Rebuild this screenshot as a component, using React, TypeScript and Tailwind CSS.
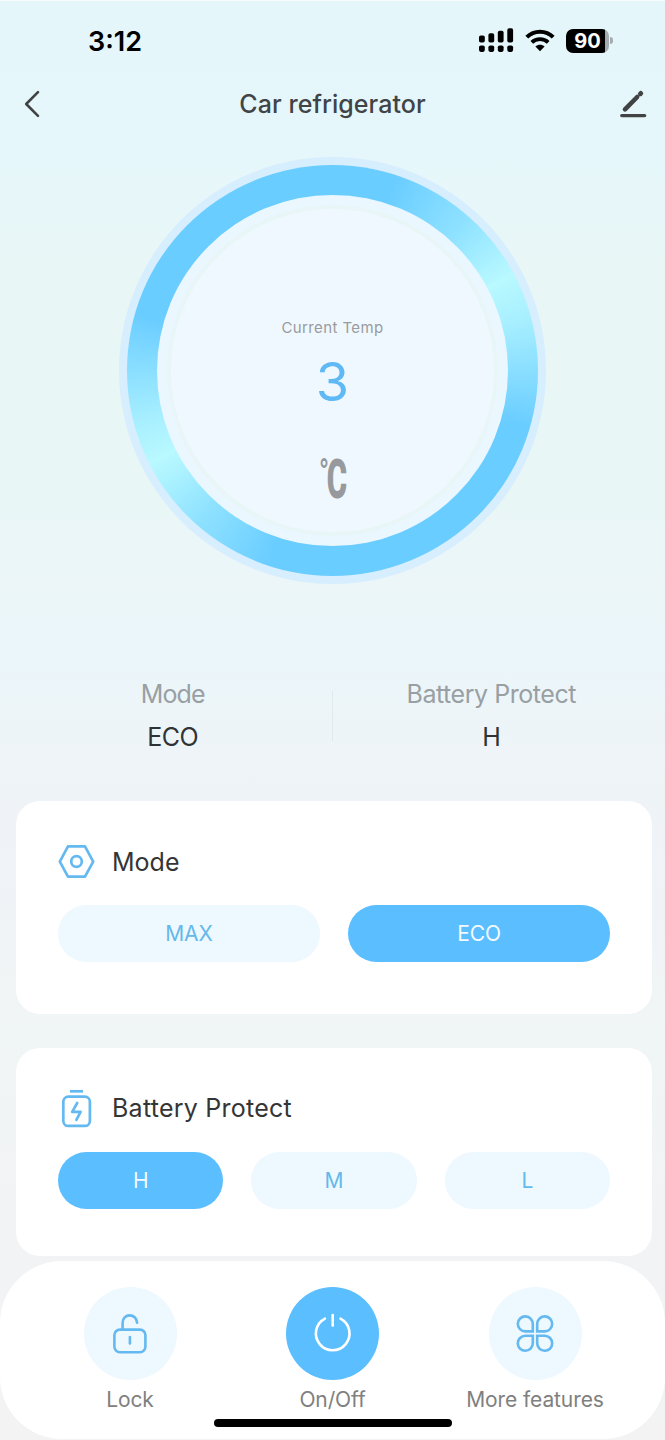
import React from 'react';

function SignalIcon() {
  return (
    <svg width="35" height="25" viewBox="0 0 35 25" fill="#000">
      <rect x="0" y="7.5" width="5.8" height="7" rx="1.8" />
      <rect x="9.4" y="5.3" width="5.8" height="9.2" rx="1.8" />
      <rect x="18.8" y="2.8" width="5.8" height="11.7" rx="1.8" />
      <rect x="28.3" y="0.2" width="5.8" height="14.3" rx="1.8" />
      <rect x="0" y="17.5" width="5.8" height="6.4" rx="1.8" />
      <rect x="9.4" y="17.5" width="5.8" height="6.4" rx="1.8" />
      <rect x="18.8" y="17.5" width="5.8" height="6.4" rx="1.8" />
      <rect x="28.3" y="17.5" width="5.8" height="6.4" rx="1.8" />
    </svg>
  );
}

function WifiIcon() {
  return (
    <svg width="30" height="23" viewBox="0 0 30 23" fill="none" stroke="#000">
      <path d="M1.8 8.2C9 0.8 21 0.8 28.2 8.2" strokeWidth="4" />
      <path d="M6.8 13.3C11.3 9 18.7 9 23.2 13.3" strokeWidth="3.8" />
      <path d="M10.4 17.6C13 15.2 17 15.2 19.6 17.6L15 22.2Z" fill="#000" stroke="none" />
    </svg>
  );
}

function ModeIcon() {
  return (
    <svg width="37" height="36" viewBox="0 0 37 36" fill="none" stroke="#64b9f0" strokeWidth="2.7">
      <path d="M10 2.4H27L35.2 17.6L27 32.6H10L1.8 17.6Z" strokeLinejoin="round" />
      <circle cx="18.5" cy="17.5" r="5.3" />
    </svg>
  );
}

function BatteryIcon() {
  return (
    <svg width="37" height="40" viewBox="0 0 37 40" fill="none" stroke="#64b9f0" strokeWidth="2.7" strokeLinejoin="round">
      <path d="M12 3.3H25" />
      <rect x="5.3" y="8.7" width="26.6" height="29.2" rx="5" />
      <path d="M19.2 15L14.2 23.8H22.6L18.4 31.8" strokeLinecap="round" />
    </svg>
  );
}

function LockIcon() {
  return (
    <svg width="36" height="42" viewBox="0 0 36 42" fill="none" stroke="#64b9f0" strokeWidth="2.6" strokeLinecap="round">
      <rect x="2.4" y="16.6" width="31" height="22.6" rx="5.5" />
      <path d="M10.6 16.4V9.8C10.6 5.2 13.8 2.4 17.6 2.4C21.4 2.4 24.4 5 25.1 9.8" />
      <path d="M17.9 24V30.5" />
    </svg>
  );
}

function PowerIcon() {
  return (
    <svg width="40" height="42" viewBox="0 0 40 42" fill="none" stroke="#fff" strokeWidth="2.6" strokeLinecap="round">
      <path d="M19.7 2V12.6" />
      <path d="M11.9 5.6A16.8 16.8 0 1 0 27.5 5.6" />
    </svg>
  );
}

function MoreIcon() {
  return (
    <svg width="38" height="38" viewBox="0 0 38 38" fill="none" stroke="#64b9f0" strokeWidth="2.6">
      <path d="M16.8 16.4V9.2A7.5 7.5 0 1 0 9.3 16.4Z" />
      <path d="M21.2 16.4V9.2A7.5 7.5 0 1 1 28.7 16.4Z" />
      <path d="M16.8 20.8V28A7.5 7.5 0 1 1 9.3 20.8Z" />
      <path d="M21.2 20.8V28A7.5 7.5 0 1 0 28.7 20.8Z" />
    </svg>
  );
}

function Pill({ label, active }: { label: string; active?: boolean }) {
  return (
    <button
      className={
        'h-[57px] flex-1 rounded-full pt-px text-[21px] tracking-[-0.1px] ' +
        (active ? 'bg-[#5abeff] text-[#f4faff]' : 'bg-[#eef8ff] text-[#64b9ea]')
      }
    >
      {label}
    </button>
  );
}

function NavItem({ label, active, children }: { label: string; active?: boolean; children: React.ReactNode }) {
  return (
    <div className="flex w-[202.5px] flex-col items-center">
      <div
        className={
          'flex h-[93px] w-[93px] items-center justify-center rounded-full ' +
          (active ? 'bg-[#5abeff]' : 'bg-[#eef8ff]')
        }
      >
        {children}
      </div>
      <div className="mt-[5px] h-[30px] whitespace-nowrap text-[21px] leading-[30px] tracking-[-0.1px] text-[#808080]">{label}</div>
    </div>
  );
}

export default function App() {
  return (
    <div className="flex h-[1440px] w-[665px] flex-col overflow-hidden border-t border-[#f6fbfc] bg-[linear-gradient(180deg,#e4f6fa_0%,#e6f7fb_11%,#e8f6f6_18%,#e9f6f6_35%,#ecf6f9_40%,#ebf6fa_46%,#eef4f7_52%,#f0f3f7_60%,#f0f5f5_72%,#f2f3f5_84%,#f3f3f4_100%)] font-['Inter',sans-serif]">
      {/* Status bar */}
      <div className="flex h-[79px] shrink-0 items-center pl-[88px] pr-[52px]">
        <div className="pt-[3px] text-[27px] font-semibold text-black">3:12</div>
        <div className="ml-auto flex items-center">
          <SignalIcon />
          <div className="ml-[11px]">
            <WifiIcon />
          </div>
          <div className="ml-[11px] flex h-6 w-[43px] items-center justify-center rounded-[7px] bg-[linear-gradient(90deg,#000_91%,#a3adb0_91%)] text-[20px] font-bold leading-none text-white">
            90
          </div>
          <div className="ml-[1px] h-[7px] w-[3px] rounded-r-full bg-[#a3adb0]" />
        </div>
      </div>

      {/* Title bar */}
      <div className="flex h-12 shrink-0 items-center justify-between pl-6 pr-[18px]">
        <svg width="17" height="28" viewBox="0 0 17 28" fill="none" stroke="#404244" strokeWidth="2.6" strokeLinecap="round" strokeLinejoin="round">
          <path d="M14 2.2L2.2 14L14 25.8" />
        </svg>
        <div className="pl-[5px] pt-px text-[25px] font-medium tracking-[0.05px] text-[#404448]">Car refrigerator</div>
        <svg width="28" height="28" viewBox="0 0 28 28" fill="none" stroke="#404244" strokeLinecap="round">
          <path d="M6 19.4L18.2 7" strokeWidth="4.6" />
          <path d="M21.4 3.8L21.8 3.4" strokeWidth="4.8" />
          <path d="M2.8 25.6H25.6" strokeWidth="3.4" />
        </svg>
      </div>

      {/* Temperature dial */}
      <div className="mx-auto mt-[29px] flex h-[427px] w-[427px] shrink-0 items-center justify-center rounded-full bg-[#d6eefd]">
        <div className="flex h-[411px] w-[411px] items-center justify-center rounded-full bg-[conic-gradient(#6acdff_18deg,#8fe2ff_42deg,#b9f9ff_62deg,#a6eeff_76deg,#6acdff_106deg,#6acdff_198deg,#8fe2ff_222deg,#b9f9ff_243deg,#a6eeff_256deg,#6acdff_286deg)]">
          <div className="flex h-[351px] w-[351px] items-center justify-center rounded-full bg-[#eaf7ff]">
            <div className="flex h-[331px] w-[331px] flex-col items-center rounded-full border-[4px] border-[#e8f6f8] bg-[#f0f8ff]">
              <div className="mt-[107px] h-6 text-[15px] leading-6 tracking-[0.4px] text-[#999b9e]">Current Temp</div>
              <div className="mt-[10px] h-[64px] text-[54px] leading-[64px] text-[#5fb9f5]">3</div>
              <div className="mt-[37px] flex h-[54px] w-[28px] items-start text-[#97999c]">
                <span className="w-[8px] origin-left scale-x-[0.72] font-['Roboto',sans-serif] text-[36px] font-bold leading-[45px]">°</span>
                <span className="origin-left scale-x-[0.59] font-['Roboto',sans-serif] text-[51px] font-semibold leading-[57px] [-webkit-text-stroke:2px_#97999c]">C</span>
              </div>
            </div>
          </div>
        </div>
      </div>

      {/* Current values */}
      <div className="mt-[87px] flex h-[90px] shrink-0 items-center pl-[14px] pr-[15px] tracking-[-0.45px]">
        <div className="flex-1 text-center leading-[43px]">
          <div className="text-[25px] tracking-[-0.9px] text-[#999fa2]">Mode</div>
          <div className="text-[25px] text-[#303335]">ECO</div>
        </div>
        <div className="h-[50px] w-px bg-[#e2e9ec]" />
        <div className="flex-1 text-center leading-[43px]">
          <div className="text-[25px] text-[#999fa2]">Battery Protect</div>
          <div className="text-[25px] text-[#303335]">H</div>
        </div>
      </div>

      {/* Mode */}
      <div className="ml-4 mt-[40px] h-[213px] w-[636px] shrink-0 rounded-[24px] bg-white px-[42px] pt-[41px]">
        <div className="flex h-10 items-center gap-[17px]">
          <ModeIcon />
          <h2 className="pt-px text-[25px] text-[#353535]">Mode</h2>
        </div>
        <div className="mt-[23px] flex gap-7">
          <Pill label="MAX" />
          <Pill label="ECO" active />
        </div>
      </div>

      {/* Battery protection */}
      <div className="ml-4 mt-[34px] h-[208px] w-[636px] shrink-0 rounded-[24px] bg-white px-[42px] pt-[40px]">
        <div className="flex h-10 items-center gap-[17px]">
          <BatteryIcon />
          <h2 className="pt-[2px] text-[25px] tracking-[0.25px] text-[#353535]">Battery Protect</h2>
        </div>
        <div className="mt-[24px] flex gap-7">
          <Pill label="H" active />
          <Pill label="M" />
          <Pill label="L" />
        </div>
      </div>

      {/* Bottom bar */}
      <div className="mt-[5px] flex h-[178px] shrink-0 flex-col items-center rounded-[62px] bg-white pt-[26px]">
        <div className="flex">
          <NavItem label="Lock">
            <LockIcon />
          </NavItem>
          <NavItem label="On/Off" active>
            <PowerIcon />
          </NavItem>
          <NavItem label="More features">
            <MoreIcon />
          </NavItem>
        </div>
        <div className="mt-[4px] h-2 w-[238px] shrink-0 rounded-full bg-black" />
      </div>
    </div>
  );
}
